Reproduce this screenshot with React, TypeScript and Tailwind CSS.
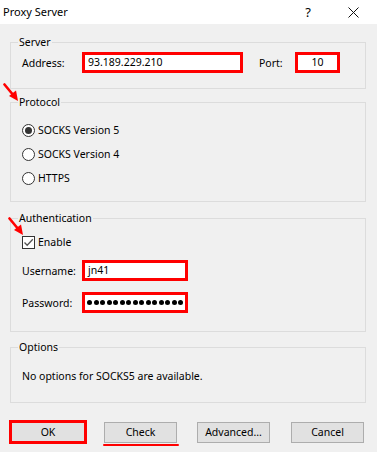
import React from "react";

const font = { fontFamily: '"Noto Sans", "Segoe UI", sans-serif' };

const GroupLabel: React.FC<{ text: string }> = ({ text }) => (
  <span className="-mt-[8px] ml-[7px] px-[1px] w-fit bg-[#f0f0f0] leading-[14px]">
    {text}
  </span>
);

const Radio: React.FC<{ label: string; checked?: boolean }> = ({ label, checked }) => (
  <div className="h-[24px] flex items-center pl-[11px]">
    <span className="w-[13px] h-[13px] rounded-full border border-[#333] bg-white flex items-center justify-center">
      {checked && <span className="w-[7px] h-[7px] rounded-full bg-[#333]" />}
    </span>
    <span className="ml-[3px] leading-[14px]">{label}</span>
  </div>
);

const Button: React.FC<{ label: string; className?: string }> = ({ label, className }) => (
  <div
    className={
      "h-[21px] w-[73px] border border-[#adadad] bg-[#e1e1e1] flex items-center justify-center leading-[14px] " +
      (className ?? "")
    }
  >
    {label}
  </div>
);

const Arrow: React.FC<{ className: string }> = ({ className }) => (
  <svg className={"absolute " + className} width="17" height="19" viewBox="0 0 17 19">
    <line x1="1.5" y1="1.5" x2="11" y2="13" stroke="#ff0000" strokeWidth="2.6" strokeLinecap="round" />
    <polygon points="15,18 6,13 13,7.5" fill="#ff0000" />
  </svg>
);

export default function App() {
  return (
    <div
      className="relative w-[377px] h-[452px] bg-[#f0f0f0] text-[10.5px] text-black overflow-hidden"
      style={font}
    >
      {/* title bar */}
      <div className="h-[24px] bg-white flex items-center pl-[3px]">
        <span className="text-[11px] leading-[16px] -mt-[1px]">Proxy Server</span>
        <span className="ml-auto text-[13px] leading-[16px] -mt-[1px]">?</span>
        <svg className="ml-[37px] mr-[18px]" width="11" height="11" viewBox="0 0 11 11">
          <path d="M0.5 0.5 L10.5 10.5 M10.5 0.5 L0.5 10.5" stroke="#111" strokeWidth="1" />
        </svg>
      </div>

      <div className="pl-[10px] pr-[11px] pt-[18px] flex flex-col">
        {/* Server */}
        <div className="h-[47px] border border-[#dcdcdc] flex flex-col">
          <GroupLabel text="Server" />
          <div className="mt-[3px] pl-[11px] flex items-center">
            <span className="w-[60px] leading-[14px]">Address:</span>
            <div className="w-[161px] h-[21px] border-[3px] border-[#ff0000] bg-white flex items-center pl-[3px]">
              93.189.229.210
            </div>
            <span className="ml-[16px] w-[36px] leading-[14px]">Port:</span>
            <div className="w-[45px] h-[21px] border-[3px] border-[#ff0000] bg-white flex items-center justify-center">
              10
            </div>
          </div>
        </div>

        {/* Protocol */}
        <div className="mt-[13px] h-[100px] border border-[#dcdcdc] flex flex-col">
          <GroupLabel text="Protocol" />
          <div className="mt-[9px] flex flex-col">
            <Radio label="SOCKS Version 5" checked />
            <Radio label="SOCKS Version 4" />
            <Radio label="HTTPS" />
          </div>
        </div>

        {/* Authentication */}
        <div className="mt-[16px] h-[114px] border border-[#dcdcdc] flex flex-col">
          <GroupLabel text="Authentication" />
          <div className="mt-[7px] h-[20px] pl-[11px] flex items-center">
            <span className="w-[13px] h-[13px] border border-[#333] bg-white flex items-center justify-center">
              <svg width="11" height="11" viewBox="0 0 11 11">
                <path d="M1.5 5.5 L4.2 8.3 L9.8 2.3" fill="none" stroke="#555" strokeWidth="1.3" />
              </svg>
            </span>
            <span className="ml-[3px] leading-[14px]">Enable</span>
          </div>
          <div className="mt-[8px] pl-[11px] flex items-center">
            <span className="w-[60px] leading-[14px]">Username:</span>
            <div className="w-[106px] h-[21px] border-[3px] border-[#ff0000] bg-white flex items-center pl-[3px]">
              jn41
            </div>
          </div>
          <div className="mt-[11px] pl-[11px] flex items-center">
            <span className="w-[60px] leading-[14px]">Password:</span>
            <div className="w-[106px] h-[21px] border-[3px] border-[#ff0000] bg-white flex items-center pl-[2px] gap-[1.5px] overflow-hidden">
              {Array.from({ length: 15 }).map((_, i) => (
                <span key={i} className="shrink-0 w-[5px] h-[5px] rounded-full bg-black" />
              ))}
            </div>
          </div>
        </div>

        {/* Options */}
        <div className="mt-[15px] h-[56px] border border-[#dcdcdc] flex flex-col">
          <GroupLabel text="Options" />
          <span className="mt-[15px] pl-[11px] leading-[14px]">
            No options for SOCKS5 are available.
          </span>
        </div>
      </div>

      {/* buttons */}
      <div className="mt-[17px] pl-[9px] flex items-center">
        <div className="w-[78px] h-[24px] border-[3px] border-[#ff0000] bg-[#e1e1e1] flex items-center justify-center leading-[14px]">
          OK
        </div>
        <div className="relative ml-[17px]">
          <Button label="Check" />
          <span className="absolute -left-[1px] -right-[2px] -bottom-[3px] h-[2px] bg-[#ff0000] rounded-full" />
        </div>
        <Button label="Advanced..." className="ml-[20px]" />
        <Button label="Cancel" className="ml-[21px]" />
      </div>

      {/* annotations */}
      <Arrow className="left-[3px] top-[83px]" />
      <Arrow className="left-[8px] top-[217px]" />
    </div>
  );
}
